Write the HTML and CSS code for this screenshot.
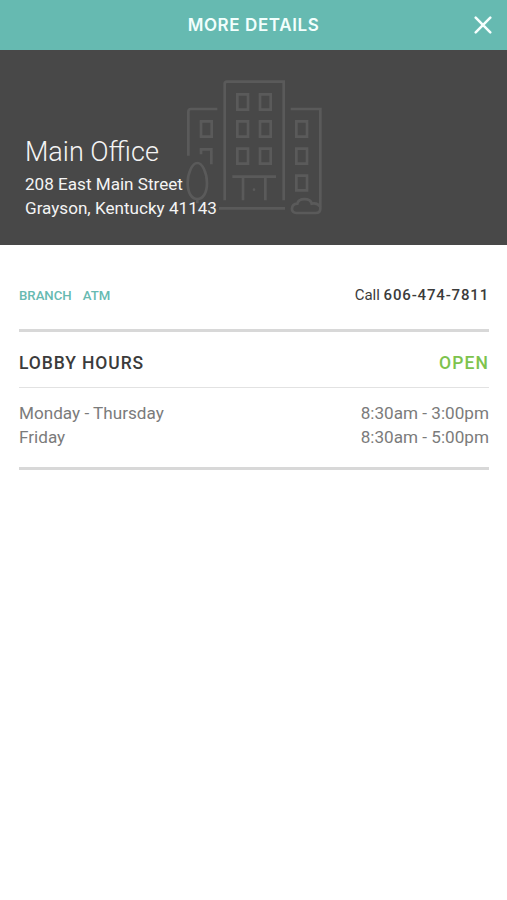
FILE: index.html
```html
<!DOCTYPE html>
<html lang="en">
<head>
<meta charset="utf-8">
<title>More Details</title>
<link rel="stylesheet" href="styles.css">
</head>
<body>
<header class="topbar">
  <h1 class="topbar-title">MORE DETAILS</h1>
  <button class="close" aria-label="Close">
    <svg width="18" height="18" viewBox="0 0 18 18"><path d="M1.7 1.7 16.3 16.3M16.3 1.7 1.7 16.3"/></svg>
  </button>
</header>
<section class="hero">
  <svg class="building" width="160" height="155" viewBox="0 0 480 465">
    <path d="M149 391V42q0-7 7-7H326V391M40 257V125q0-8 8-8H127M347 117H436V416q0 13-14 13H364c-18 0-18-26 3-28 4-18 39-18 43 0 13-3 20 1 25 9M132 415H330"/>
    <path d="M172 320H303M204 323V391M271 323V391M67 279c-15 0-29 30-29 60 0 30 12 48 29 48s29-18 29-48c0-30-14-60-29-60M67 388V400M78 253V238H109V283"/>
    <path d="M187 73H219V119H187ZM255 73H287V119H255ZM187 154H219V200H187ZM255 154H287V200H255ZM187 236H219V281H187ZM255 236H287V281H255ZM78 154H110V200H78ZM364 154H396V200H364ZM364 236H396V281H364ZM364 317H396V361H364Z"/>
    <circle cx="237" cy="359" r="4"/>
  </svg>
  <div class="address">
    <h2 class="name">Main Office</h2>
    <p class="street">208 East Main Street</p>
    <p class="city">Grayson, Kentucky 41143</p>
  </div>
</section>
<main class="content">
  <div class="contact">
    <div class="tags"><span class="tag">BRANCH</span><span class="tag">ATM</span></div>
    <div class="call">Call <strong class="phone">606-474-7811</strong></div>
  </div>
  <section class="hours">
    <div class="hours-head">
      <h3 class="hours-title">LOBBY HOURS</h3>
      <span class="status">OPEN</span>
    </div>
    <div class="hours-list">
      <div class="row"><span class="day">Monday - Thursday</span><span class="time">8:30am - 3:00pm</span></div>
      <div class="row"><span class="day">Friday</span><span class="time">8:30am - 5:00pm</span></div>
    </div>
  </section>
</main>
</body>
</html>
```
FILE: styles.css
```css
* { box-sizing: border-box; margin: 0; padding: 0; }
body { background: #fff; color: #3b3b3b; font-family: Roboto, sans-serif; }

.topbar {
  display: grid;
  grid-template-columns: 50px 1fr 50px;
  align-items: center;
  height: 50px;
  background: #66bab1;
  color: #f2fffd;
}
.topbar-title {
  grid-column: 2;
  text-align: center;
  font: 600 17px/24px Inter, sans-serif;
  letter-spacing: 0.6px;
  white-space: nowrap;
}
.close { display: flex; justify-content: center; padding-left: 1px; border: 0; background: none; }
.close svg { fill: none; stroke: #f7fffe; stroke-width: 2.5; stroke-linecap: round; }

.hero { position: relative; height: 195px; padding: 85px 25px 0; background: #484848; color: #f4f4f4; }
.building { position: absolute; left: 175px; top: 20px; fill: none; stroke: #5a5a5a; stroke-width: 8; }
.building circle { fill: #5a5a5a; stroke: none; }
.address { position: relative; }
.name { font-size: 27px; font-weight: 300; line-height: 34px; }
.street, .city { font-size: 17.1px; line-height: 24px; }
.street { margin-top: 3px; }

.content { padding: 0 18px 0 19px; }
.contact {
  display: flex;
  justify-content: space-between;
  align-items: center;
  height: 87px;
  padding-top: 16px;
  border-bottom: 3px solid #d8d8d8;
}
.tags { display: flex; gap: 11px; }
.tag { font-size: 13.2px; font-weight: 500; color: #66bab1; }
.call { font-size: 15px; }
.phone { font-weight: 500; letter-spacing: 0.83px; }

.hours { border-bottom: 3px solid #d8d8d8; }
.hours-head {
  display: flex;
  justify-content: space-between;
  align-items: center;
  height: 56px;
  padding-top: 6px;
  border-bottom: 1px solid #e2e2e2;
}
.hours-title, .status { font-size: 17.5px; font-weight: 500; letter-spacing: 0.9px; }
.status { letter-spacing: 1.1px; color: #7dc34d; }
.hours-list { padding: 13px 0 18px; color: #7b7b7b; }
.row { display: flex; justify-content: space-between; font-size: 17.15px; line-height: 24px; }
```
